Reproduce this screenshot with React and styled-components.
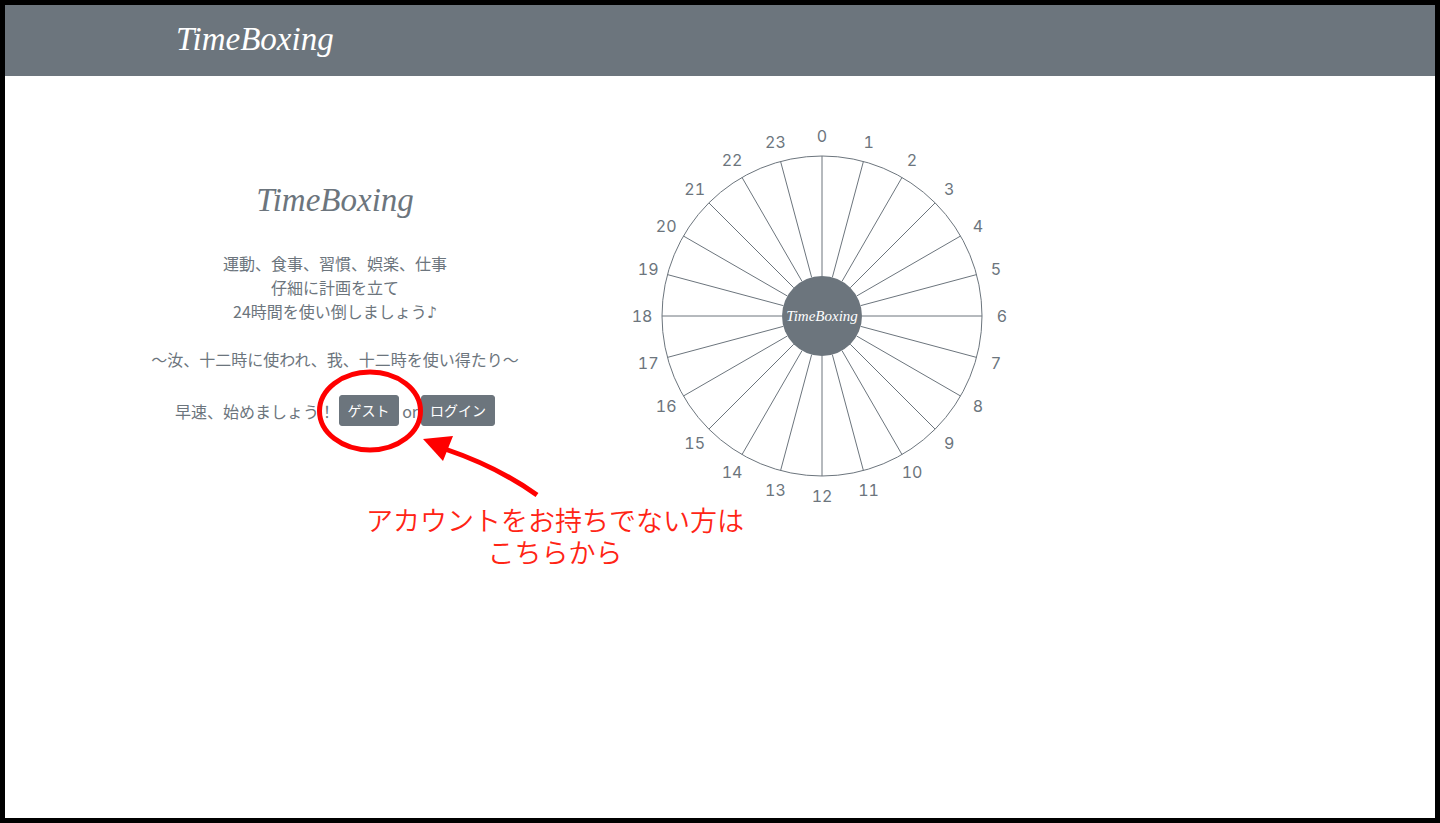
import React from "react";
import styled, { createGlobalStyle } from "styled-components";

const slate = "#6c757d";
const red = "#ff0000";
const script = `"Apple Chancery", "Liberation Serif", serif`;

const GlobalStyle = createGlobalStyle`
  *, *::before, *::after { box-sizing: border-box; }
  body {
    margin: 0;
    background: #fff;
    color: ${slate};
    font-family: "Noto Sans CJK JP", sans-serif;
    font-size: 16px;
    line-height: 24px;
  }
`;

const Page = styled.div`
  min-height: 100vh;
  border: 5px solid #000;
`;

const Header = styled.header`
  display: flex;
  justify-content: center;
  background: ${slate};
`;

const HeaderInner = styled.div`
  flex: 1;
  max-width: 1140px;
  padding: 10px 26px 13px;
`;

const Brand = styled.a`
  display: block;
  width: fit-content;
  color: #fff;
  font: italic 33px/48px ${script};
  text-decoration: none;
`;

const Hero = styled.main`
  position: relative;
  display: grid;
  grid-template-columns: 370px 400px;
  column-gap: 102px;
  max-width: 1140px;
  margin: 0 auto;
  padding-top: 40px;
`;

const Intro = styled.section`
  padding-top: 60px;
  text-align: center;
`;

const Title = styled.h1`
  margin: 0 0 27px;
  font: italic 33px/48px ${script};
`;

const Lead = styled.p`
  margin: 0 0 24px;
`;

const Note = styled.span`
  font-family: "DejaVu Sans", sans-serif;
  line-height: 1;
`;

const Actions = styled.div`
  display: flex;
  justify-content: center;
  align-items: center;
  white-space: pre;
`;

const Or = styled.span`
  padding-right: 3px;
`;

const Button = styled.button`
  padding: 4px 8px;
  border: 1px solid ${slate};
  border-radius: 3px;
  background: ${slate};
  color: #fff;
  font-family: inherit;
  font-size: 14px;
  line-height: 21px;
  cursor: pointer;
`;

const Clock = styled.svg`
  display: block;
  width: 400px;
  height: 400px;
  overflow: visible;
  fill: ${slate};
  font: 16px Inter, sans-serif;
  font-variant-numeric: tabular-nums;

  .line {
    fill: none;
    stroke: ${slate};
  }

  .brand {
    fill: #fff;
    font: italic 15px ${script};
  }
`;

const Marker = styled.svg`
  position: absolute;
  left: 160px;
  top: 286px;
  width: 240px;
  height: 140px;
  pointer-events: none;
`;

const Callout = styled.p`
  position: absolute;
  left: 205px;
  top: 428px;
  width: 400px;
  margin: 0;
  color: #ff2415;
  font-size: 27px;
  font-weight: 350;
  line-height: 32px;
  text-align: center;
`;

const hours = Array.from({ length: 24 }, (_, hour) => {
  const angle = (hour * Math.PI) / 12;
  return { hour, x: Math.sin(angle), y: -Math.cos(angle) };
});

function HourWheel() {
  return (
    <Clock viewBox="-200 -200 400 400" role="img" aria-label="24時間">
      <circle className="line" r="160" />
      {hours.map(({ hour, x, y }) => (
        <g key={hour}>
          <line className="line" x1={x * 40} y1={y * 40} x2={x * 160} y2={y * 160} />
          <text x={x * 180} y={y * 180 + 6} textAnchor="middle">{hour}</text>
        </g>
      ))}
      <circle r="40" />
      <text className="brand" y="5" textAnchor="middle">TimeBoxing</text>
    </Clock>
  );
}

export default function App() {
  return (
    <>
      <GlobalStyle />
      <Page>
        <Header>
          <HeaderInner>
            <Brand href="#">TimeBoxing</Brand>
          </HeaderInner>
        </Header>
        <Hero>
          <Intro>
            <Title>TimeBoxing</Title>
            <Lead>
              運動、食事、習慣、娯楽、仕事<br />
              仔細に計画を立て<br />
              24時間を使い倒しましょう<Note>♪</Note>
            </Lead>
            <Lead>〜汝、十二時に使われ、我、十二時を使い得たり〜</Lead>
            <Actions>
              <span>早速、始めましょう！ </span>
              <Button type="button">ゲスト</Button>
              <Or> or</Or>
              <Button type="button">ログイン</Button>
            </Actions>
          </Intro>
          <HourWheel />
          <Marker viewBox="310 362 240 140" aria-hidden="true">
            <ellipse cx="370" cy="411" rx="50.5" ry="39" fill="none" stroke={red} strokeWidth="5" />
            <path d="M445 449 Q498 467 537 495" fill="none" stroke={red} strokeWidth="5" />
            <path d="M423 439 L453 436 L443 461 Z" fill={red} />
          </Marker>
          <Callout>
            アカウントをお持ちでない方は<br />
            こちらから
          </Callout>
        </Hero>
      </Page>
    </>
  );
}
